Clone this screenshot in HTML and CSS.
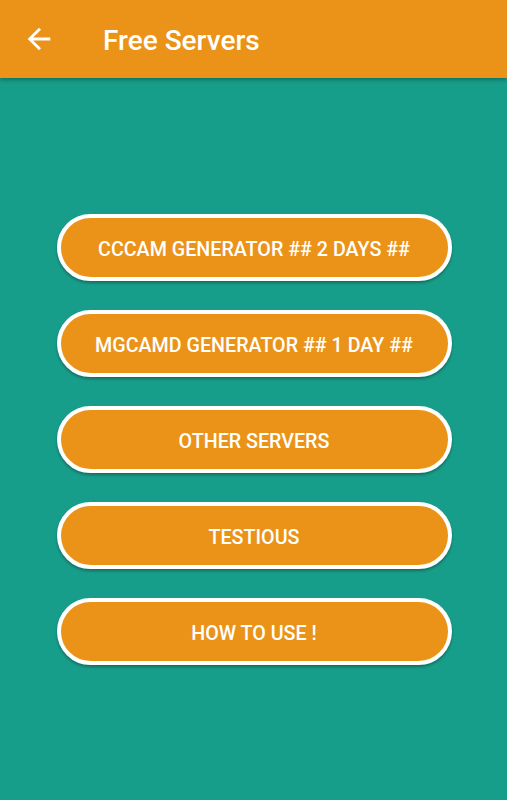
FILE: index.html
```html
<!DOCTYPE html>
<html lang="en">

<head>
  <meta charset="UTF-8">
  <meta name="viewport" content="width=device-width, initial-scale=1.0">
  <title>Free Servers</title>
  <link rel="stylesheet" href="styles.css">
</head>

<body>
  <header class="toolbar">
    <a href="#" class="back">
      <svg viewBox="0 0 24 24" width="34" height="34">
        <path d="M20 11H7.83l5.59-5.59L12 4l-8 8 8 8 1.41-1.41L7.83 13H20v-2z" fill="#fff" />
      </svg>
    </a>
    <h1>Free Servers</h1>
  </header>

  <main class="menu">
    <button class="menu-btn">CCCAM GENERATOR ## 2 DAYS ##</button>
    <button class="menu-btn">MGCAMD GENERATOR ## 1 DAY ##</button>
    <button class="menu-btn">OTHER SERVERS</button>
    <button class="menu-btn">TESTIOUS</button>
    <button class="menu-btn">HOW TO USE !</button>
  </main>
</body>

</html>
```

FILE: styles.css
```css
html, body {
  height: 100%;
}

body {
  margin: 0;
  font-family: Roboto, "Noto Sans", sans-serif;
  background: #179e8a;
  display: flex;
  flex-direction: column;
}

.toolbar {
  height: 78px;
  background: #ea9318;
  display: flex;
  align-items: center;
  box-shadow: 0 2px 4px rgba(0, 0, 0, 0.3);
  position: relative;
}

.back {
  display: flex;
  margin-left: 22px;
  width: 34px;
  height: 34px;
}

.toolbar h1 {
  margin: 2px 0 0 47px;
  color: #fff;
  font-size: 28px;
  font-weight: 500;
}

.menu {
  display: flex;
  flex-direction: column;
  align-items: center;
  gap: 29px;
  padding: 136px 0 0 1px;
}

.menu-btn {
  width: 395px;
  height: 67px;
  padding: 3px 0 0;
  border: 4px solid #fff;
  border-radius: 34px;
  background: #ea9318;
  color: #fff;
  font-family: Roboto, "Noto Sans", sans-serif;
  font-size: 19.7px;
  font-weight: 500;
  box-shadow: 0 2px 3px rgba(0, 0, 0, 0.3);
  cursor: pointer;
}
```
